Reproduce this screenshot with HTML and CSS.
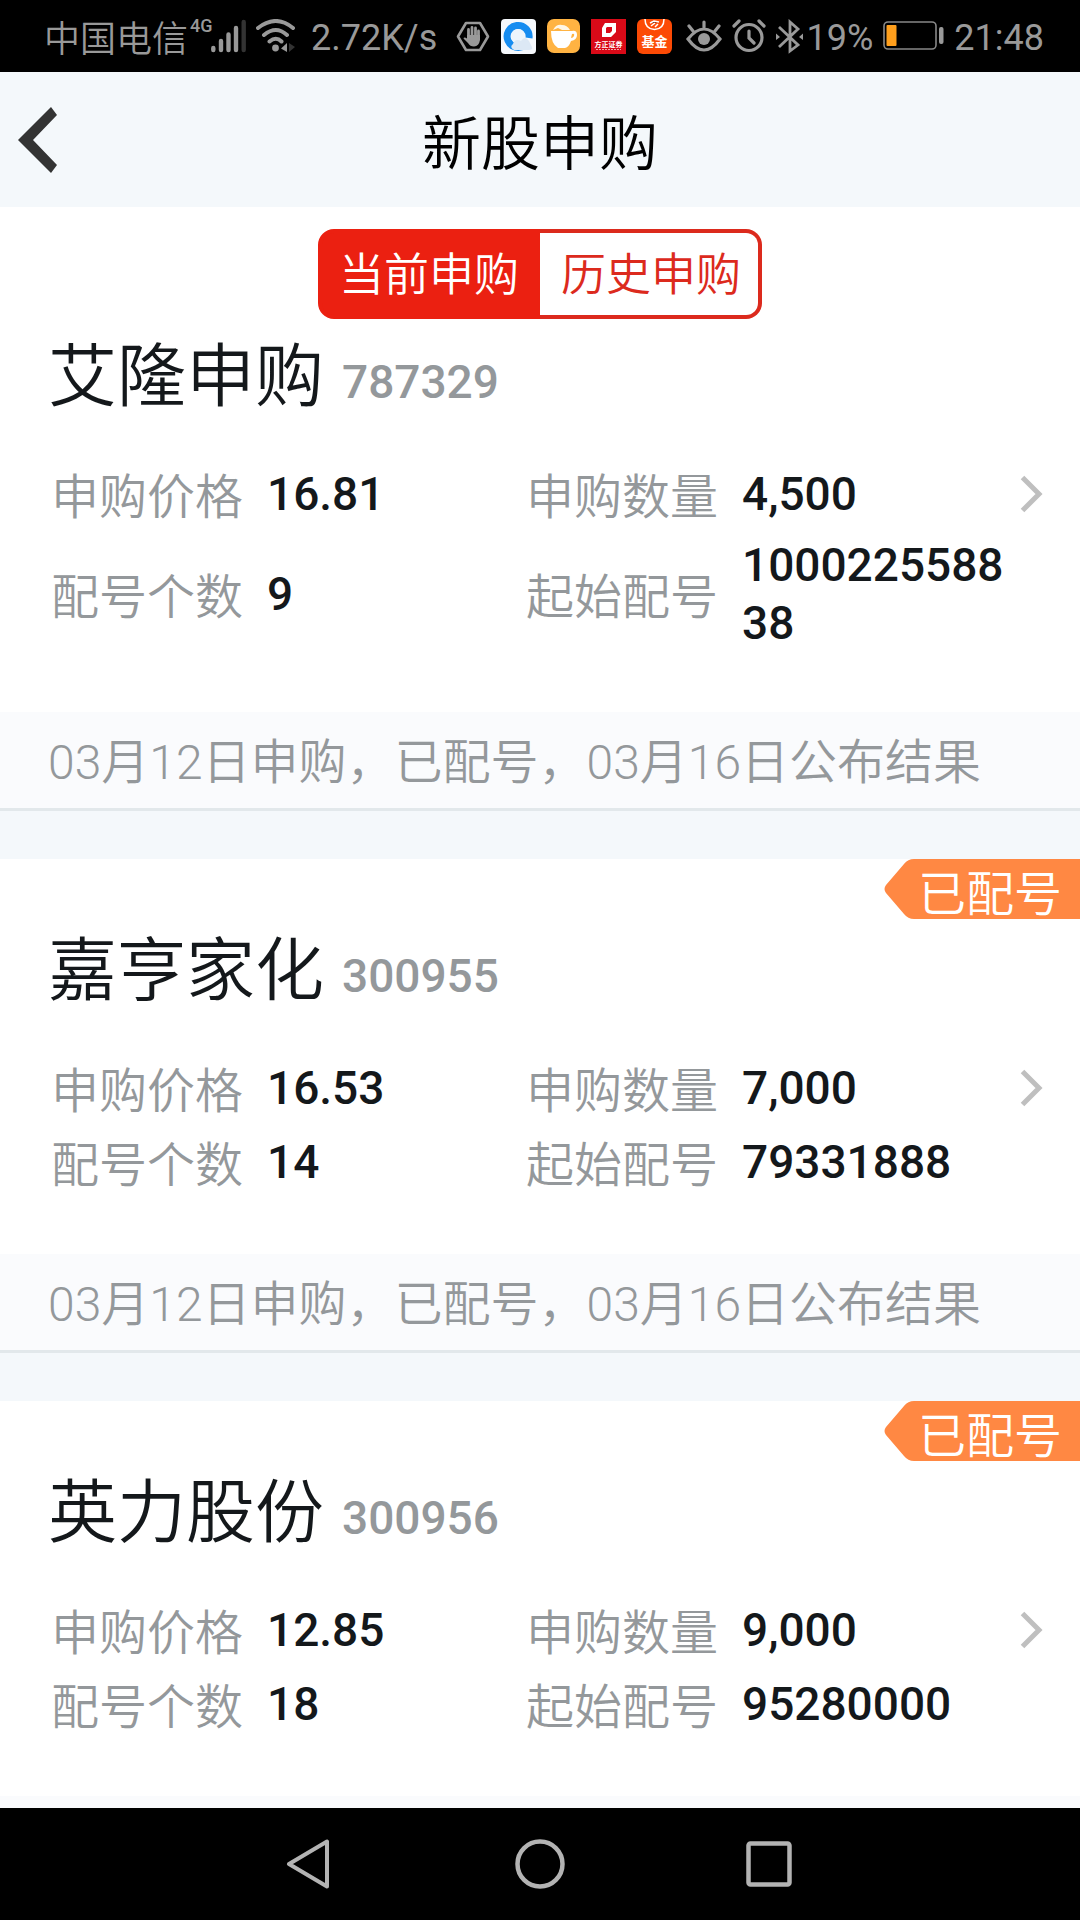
FILE: index.html
```html
<!DOCTYPE html>
<html lang="zh-CN">
<head>
<meta charset="utf-8">
<meta name="viewport" content="width=device-width">
<title>新股申购</title>
<link rel="stylesheet" href="styles.css">
</head>
<body>
<div class="statusbar">
  <div class="network">
    <span class="carrier">中国电信</span>
    <span class="generation">4G</span>
    <svg class="signal" width="35" height="34" viewBox="0 0 35 34" stroke="#999" stroke-width="4.4" stroke-linecap="round"><path d="M2.3 29V31M10 22V31M17.500 15.500V31M25 9V31"/><path d="M32.700 3V31" stroke="#333"/></svg>
    <svg class="wifi" width="40" height="34" viewBox="0 0 40 34" fill="none" stroke="#999" stroke-width="4" stroke-linecap="round"><path d="M2 9Q20-5 37 9M8 16Q20 6 31 16M13.500 22.500Q20 17 25.500 22.500"/><circle cx="19.500" cy="29" r="3.400" fill="#999" stroke="none"/><path d="M31 24V33L25 29.500Z" fill="#999" stroke="none"/><path d="M33 24V33L39 28Z" fill="#333" stroke="none"/></svg>
    <span class="speed">2.72K/s</span>
  </div>
  <div class="apps">
    <svg width="34" height="34" viewBox="0 0 34 34"><path d="M10 4H24L32 17.500 24 31H10L2 17.500Z" fill="none" stroke="#999" stroke-width="2.600" stroke-linejoin="round"/><path d="M12.500 19V10.500M16 18V8.500M19.500 18V9M22.500 19V12" stroke="#999" stroke-width="2.800" stroke-linecap="round"/><path d="M11 16H24V21Q23 27 18 27.500 14 27.500 12 24L7.500 19.500Q8 17.500 11 19.500Z" fill="#999"/></svg>
    <svg width="35" height="35" viewBox="0 0 35 35"><rect width="35" height="35" rx="4" fill="#f5f8fc"/><path d="M24 26A11 11 0 1 1 28 19" fill="none" stroke="#168cf0" stroke-width="7"/><circle cx="17" cy="17" r="7" fill="#edf5fc"/><path d="M13 31Q8 28 12 25 14 19 20 22 24 16 28 22L31 28Q32 31 28 31Z" fill="#dce8f5"/></svg>
    <svg width="33" height="34" viewBox="0 0 33 34"><rect width="33" height="34" rx="7" fill="#ffb342"/><path d="M4 12H25Q30 11 30 16 30 21 24 22 22 28 18 29H11Q4 25 4 12Z" fill="#fff"/><path d="M25 15Q28 14 27 17 26 19 24 19Z" fill="#ffb342"/><path d="M6 11Q9 5 15 6 20 6 23 11H15L11 9Z" fill="#fff6e5"/></svg>
    <svg width="35" height="35" viewBox="0 0 35 35"><rect width="35" height="35" fill="#d90a18"/><path d="M14 4H25V13L20 18H11V9ZM15 9V14H19L21 12V8H16Z" fill="#fff" fill-rule="evenodd"/><text x="17.500" y="27.500" class="app-caption">方正证券</text><path d="M5 30.500H30" stroke="#f5a5aa" stroke-dasharray="2 1"/></svg>
    <svg width="35" height="35" viewBox="0 0 35 35"><rect width="35" height="35" rx="6" fill="#fc4a05"/><path d="M8 0Q8 10 17.500 10.500 27 10 27 0" fill="none" stroke="#fff" stroke-width="1.500"/><path d="M13 4L17 2 22 3M14 7L18 4M18 8L21 5" stroke="#fff" stroke-width="1.500"/><text x="17.500" y="27" class="app-title">基金</text></svg>
  </div>
  <div class="system">
    <svg width="36" height="34" viewBox="0 0 36 34" fill="none" stroke="#999" stroke-width="3.200" stroke-linecap="round"><path d="M2 20Q18 0 34 20 18 42 2 20ZM18 8V3M7 12L3 7M29 12L33 7"/><circle cx="18" cy="20" r="6" fill="#999" stroke="none"/></svg>
    <svg width="34" height="34" viewBox="0 0 34 34" fill="none" stroke="#999" stroke-width="3.200" stroke-linecap="round"><circle cx="17" cy="18.500" r="13"/><path d="M17 12V19L22 24M2 7L7 2M27 2L32 7"/></svg>
    <svg width="27" height="35" viewBox="0 0 27 35" fill="none" stroke="#999" stroke-width="2.800"><path d="M3 8L22 26 14 32V3L22 10 3 28"/><path d="M0 14.500V21L4 18ZM27 14.500V21L23 18Z" fill="#999" stroke="none"/></svg>
    <span class="percent">19%</span>
    <svg class="battery" width="61" height="30" viewBox="0 0 61 30"><rect x="1" y="1" width="52" height="27" rx="4" fill="none" stroke="#888" stroke-width="1.600"/><rect x="3.500" y="4" width="10" height="21" rx="1" fill="#ff9f1c"/><rect x="56" y="6" width="4.500" height="17" rx="2" fill="#999"/></svg>
    <span class="clock">21:48</span>
  </div>
</div>

<header class="header">
  <button class="back" type="button" aria-label="返回"><svg width="40" height="66" viewBox="0 0 40 66"><path d="M0 33L33 0 39 8 15 33 39 58 33 66Z" fill="#333"/></svg></button>
  <h1 class="title">新股申购</h1>
</header>

<main class="content">
  <nav class="tabs">
    <button class="tab tab-active" type="button">当前申购</button>
    <button class="tab tab-history" type="button">历史申购</button>
  </nav>

  <article class="card card-first">
    <h2 class="name"><span class="stock">艾隆申购</span> <span class="code">787329</span></h2>
    <div class="details">
      <dl class="fields">
        <div class="field"><dt>申购价格</dt><dd>16.81</dd></div>
        <div class="field"><dt>申购数量</dt><dd>4,500</dd></div>
        <div class="field"><dt>配号个数</dt><dd>9</dd></div>
        <div class="field"><dt>起始配号</dt><dd>100022558838</dd></div>
      </dl>
      <a class="more" href="#" aria-label="查看详情"><svg width="23" height="38" viewBox="0 0 23 38"><path d="M2.500 2.500L19 19 2.500 35.500" fill="none" stroke="#bfbfbf" stroke-width="5"/></svg></a>
    </div>
    <p class="result">03月12日申购，已配号，03月16日公布结果</p>
  </article>

  <article class="card">
    <span class="ribbon"><svg class="ribbon-tip" width="34" height="60" viewBox="0 0 34 60"><path d="M34 0H30Q24 0 20 5L2 26Q-1 30 2 34L20 55Q24 60 30 60H34Z" fill="#ff8843"/></svg><span class="ribbon-text">已配号</span></span>
    <h2 class="name"><span class="stock">嘉亨家化</span> <span class="code">300955</span></h2>
    <div class="details">
      <dl class="fields">
        <div class="field"><dt>申购价格</dt><dd>16.53</dd></div>
        <div class="field"><dt>申购数量</dt><dd>7,000</dd></div>
        <div class="field"><dt>配号个数</dt><dd>14</dd></div>
        <div class="field"><dt>起始配号</dt><dd>79331888</dd></div>
      </dl>
      <a class="more" href="#" aria-label="查看详情"><svg width="23" height="38" viewBox="0 0 23 38"><path d="M2.500 2.500L19 19 2.500 35.500" fill="none" stroke="#bfbfbf" stroke-width="5"/></svg></a>
    </div>
    <p class="result">03月12日申购，已配号，03月16日公布结果</p>
  </article>

  <article class="card">
    <span class="ribbon"><svg class="ribbon-tip" width="34" height="60" viewBox="0 0 34 60"><path d="M34 0H30Q24 0 20 5L2 26Q-1 30 2 34L20 55Q24 60 30 60H34Z" fill="#ff8843"/></svg><span class="ribbon-text">已配号</span></span>
    <h2 class="name"><span class="stock">英力股份</span> <span class="code">300956</span></h2>
    <div class="details">
      <dl class="fields">
        <div class="field"><dt>申购价格</dt><dd>12.85</dd></div>
        <div class="field"><dt>申购数量</dt><dd>9,000</dd></div>
        <div class="field"><dt>配号个数</dt><dd>18</dd></div>
        <div class="field"><dt>起始配号</dt><dd>95280000</dd></div>
      </dl>
      <a class="more" href="#" aria-label="查看详情"><svg width="23" height="38" viewBox="0 0 23 38"><path d="M2.500 2.500L19 19 2.500 35.500" fill="none" stroke="#bfbfbf" stroke-width="5"/></svg></a>
    </div>
    <p class="result"></p>
  </article>
</main>

<footer class="navbar">
  <button class="key" type="button" aria-label="后退"><svg width="50" height="50" viewBox="0 0 50 50"><path d="M42 2.500V47.500L4 25Z" fill="none" stroke="#b3b3b3" stroke-width="4" stroke-linejoin="round"/></svg></button>
  <button class="key" type="button" aria-label="主屏幕"><svg width="50" height="50" viewBox="0 0 50 50"><circle cx="25" cy="25" r="22.500" fill="none" stroke="#b3b3b3" stroke-width="4.500"/></svg></button>
  <button class="key" type="button" aria-label="最近任务"><svg width="50" height="50" viewBox="0 0 50 50"><rect x="3.500" y="4.500" width="41" height="41" rx="2" fill="none" stroke="#b3b3b3" stroke-width="4.500"/></svg></button>
</footer>
</body>
</html>
```

FILE: styles.css
```css
* {
  box-sizing: border-box;
}

body {
  display: flex;
  flex-direction: column;
  height: 100vh;
  margin: 0;
  background: #fff;
  color: #14181b;
  font-family: Roboto, "Noto Sans CJK SC", sans-serif;
  font-weight: 350;
}

h1, h2, p, dl, dd {
  margin: 0;
  font-weight: inherit;
}

button {
  padding: 0;
  border: 0;
  background: none;
  color: inherit;
  font: inherit;
}

svg {
  display: block;
  flex: none;
}

/* Phone status bar */
.statusbar {
  display: flex;
  flex: none;
  justify-content: space-between;
  align-items: center;
  height: 72px;
  padding: 0 36px 0 44px;
  background: #000;
  color: #999;
  font-size: 36px;
  line-height: 64px;
  white-space: nowrap;
}

.network,
.apps,
.system {
  display: flex;
  align-items: center;
}

.carrier {
  padding-top: 8px;
}

.generation {
  align-self: flex-start;
  width: 21px;
  margin: 16px 0 0 2px;
  font-size: 18px;
  font-weight: 500;
  line-height: 20px;
}

.wifi {
  margin: 0 15px 0 10px;
}

.speed,
.percent,
.clock {
  padding-top: 4px;
  font-weight: 400;
}

.apps {
  gap: 11px;
  padding-left: 4px;
}

.app-caption {
  fill: #fff;
  font-size: 7px;
  font-weight: 700;
  text-anchor: middle;
}

.app-title {
  fill: #fff;
  font-size: 13px;
  font-weight: 700;
  text-anchor: middle;
}

.system {
  gap: 10px;
}

.percent {
  margin-left: -7px;
}

/* Page header */
.header {
  display: flex;
  flex: none;
  align-items: center;
  height: 135px;
  padding: 0 18px;
  background: #f4f8fb;
  color: #000;
}

.back {
  flex: none;
  width: 40px;
}

.title {
  flex: 1;
  padding: 10px 40px 0 0;
  font-size: 59px;
  line-height: 80px;
  text-align: center;
}

/* Subscription list */
.content {
  flex: 1;
  min-height: 0;
  overflow: hidden;
}

.tabs {
  display: flex;
  width: 444px;
  height: 90px;
  margin: 22px auto 0;
}

.tab {
  width: 50%;
  padding-top: 4px;
  border: 4px solid #dc2a1d;
  color: #dc2a1d;
  font-size: 45px;
  line-height: 78px;
}

.tab-active {
  border-color: #eb2011;
  border-radius: 16px 0 0 16px;
  background: #eb2011;
  color: #fff;
}

.tab-history {
  padding-left: 4px;
  border-left: 0;
  border-radius: 0 16px 16px 0;
}

.card {
  position: relative;
  padding-top: 69px;
}

.card-first {
  padding-top: 15px;
}

.name {
  display: flex;
  gap: 18px;
  align-items: center;
  height: 80px;
  padding: 0 48px;
  line-height: 80px;
}

.stock {
  padding-top: 8px;
  font-size: 69px;
}

.code {
  padding-top: 16px;
  color: #94989b;
  font-size: 46px;
  font-weight: 500;
}

.details {
  display: flex;
  padding: 48px 37px 60px 51px;
}

.fields {
  display: grid;
  flex: 1;
  grid-template-columns: 475fr 480fr;
  row-gap: 10px;
}

.field {
  display: flex;
  gap: 24px;
  align-items: center;
  min-height: 64px;
}

.field dt {
  flex: none;
  padding-top: 8px;
  color: #94989b;
  font-size: 48px;
  line-height: 54px;
}

.field dd {
  font-size: 46px;
  font-weight: 500;
  line-height: 58px;
  word-break: break-all;
}

.more {
  display: flex;
  justify-content: flex-end;
  align-items: center;
  width: 37px;
  height: 64px;
}

.result {
  height: 147px;
  padding: 3px 48px 0;
  border-bottom: 48px solid #f4f8fb;
  background: #fafbfd;
  box-shadow: inset 0 -3px #e2e8eb;
  color: #94989b;
  font-size: 48px;
  line-height: 96px;
  white-space: nowrap;
}

.ribbon {
  display: flex;
  position: absolute;
  top: 0;
  right: 0;
}

.ribbon-text {
  height: 60px;
  padding: 6px 18px 0 0;
  background: #ff8843;
  color: #fff;
  font-size: 48px;
  line-height: 60px;
}

/* System navigation keys */
.navbar {
  display: flex;
  flex: none;
  gap: 180px;
  justify-content: center;
  align-items: center;
  height: 112px;
  background: #000;
}
```
